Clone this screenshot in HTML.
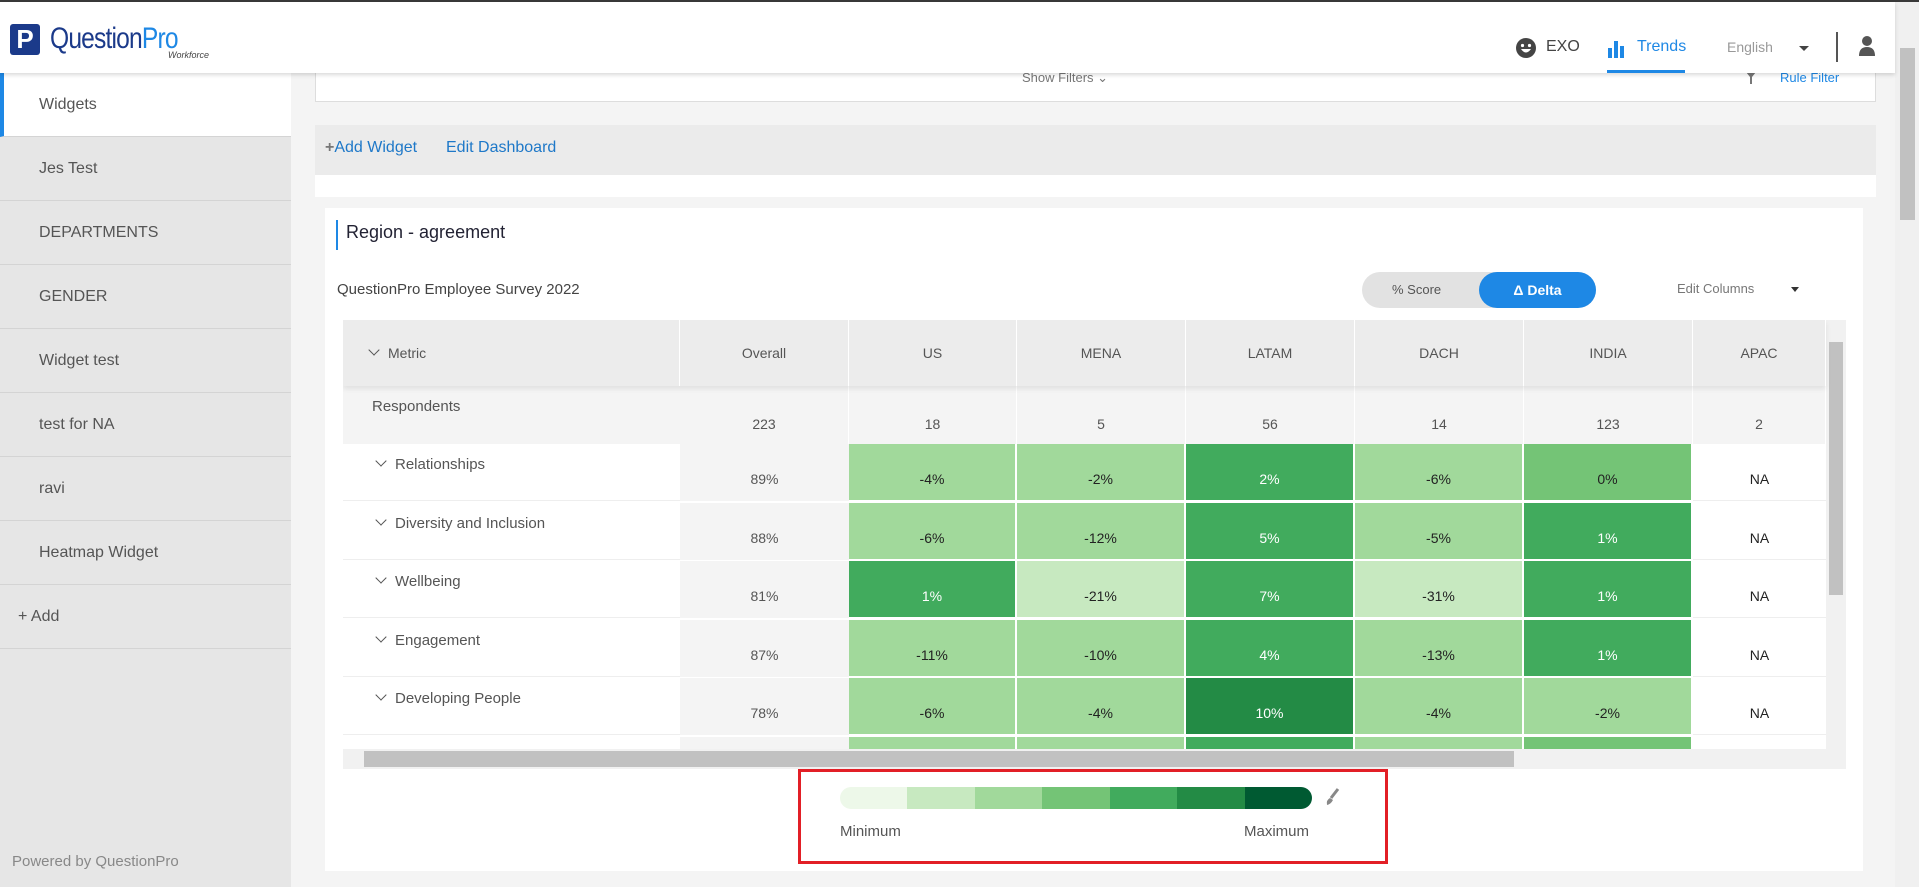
<!DOCTYPE html>
<html><head><meta charset="utf-8"><style>
*{box-sizing:border-box;margin:0;padding:0}
body{width:1919px;height:887px;overflow:hidden;background:#f4f4f4;font-family:"Liberation Sans",sans-serif;color:#555;position:relative}
.a{position:absolute}
.top{left:0;top:0;width:1919px;height:2px;background:#3a3a3a}
.hdr{left:0;top:2px;width:1895px;height:71px;background:#fff;box-shadow:0 2px 4px rgba(0,0,0,.15);z-index:5}
.side{left:0;top:73px;width:291px;height:814px;background:#e6e6e6}
.si{position:absolute;left:0;width:291px;height:64px;border-bottom:1px solid #d4d4d4;font-size:16px;color:#555;padding-left:39px;line-height:64px}
.cell{position:absolute;text-align:center;font-size:14px;color:#333}
.hc{position:absolute;top:0;height:66px;line-height:66px;text-align:center;font-size:14px;color:#555;border-right:1px solid #fff}
.rl{position:absolute;font-size:15px;color:#555}
.chev{display:inline-block;width:8px;height:8px;border-right:1.6px solid #555;border-bottom:1.6px solid #555;transform:rotate(45deg);margin-right:10px;position:relative;top:-4px}
</style></head><body>
<div class="a top"></div>
<div class="a hdr">
  <div class="a" style="left:10px;top:22px;width:30px;height:31px;background:#1b3a8a;border-radius:3px;color:#fff;font-weight:bold;font-size:26px;line-height:31px;text-align:center">P</div>
  <div class="a" style="left:50px;top:20px;font-size:30px;color:#1b3a8a;letter-spacing:-1px;transform:scaleX(.82);transform-origin:left">Question<span style="color:#1e88e5">Pro</span></div>
  <div class="a" style="left:168px;top:48px;font-size:9px;font-style:italic;color:#444">Workforce</div>
  <svg class="a" style="left:1515px;top:35px" width="22" height="22"><circle cx="11" cy="11" r="10" fill="#444"/><circle cx="7.5" cy="8.5" r="1.6" fill="#fff"/><circle cx="14.5" cy="8.5" r="1.6" fill="#fff"/><path d="M6 12 Q11 19 16 12Z" fill="#fff"/></svg>
  <div class="a" style="left:1546px;top:36px;font-size:16px;color:#444">EXO</div>
  <svg class="a" style="left:1607px;top:37px" width="20" height="20"><rect x="1" y="9" width="4" height="10" fill="#1e88e5"/><rect x="7" y="2" width="4" height="17" fill="#1e88e5"/><rect x="13" y="7" width="4" height="12" fill="#1e88e5"/></svg>
  <div class="a" style="left:1637px;top:36px;font-size:16px;color:#1e88e5">Trends</div>
  <div class="a" style="left:1607px;top:68px;width:78px;height:3px;background:#1e88e5"></div>
  <div class="a" style="left:1727px;top:37px;font-size:14px;color:#999">English</div>
  <div class="a" style="left:1799px;top:44px;border:5px solid transparent;border-top:5px solid #444"></div>
  <div class="a" style="left:1836px;top:30px;width:2px;height:30px;background:#555"></div>
  <svg class="a" style="left:1858px;top:32px" width="18" height="24"><circle cx="9" cy="7" r="5" fill="#555"/><path d="M1 22 Q1 13 9 13 Q17 13 17 22Z" fill="#555"/></svg>
</div>
<div class="a" style="left:1895px;top:2px;width:24px;height:885px;background:#f0f0f0"></div>
<div class="a" style="left:1900px;top:48px;width:15px;height:172px;background:#c1c1c1"></div>
<div class="a side">
  <div class="si" style="top:0;background:#fff;border-left:4px solid #1e88e5;padding-left:35px">Widgets</div>
  <div class="si" style="top:64px">Jes Test</div>
  <div class="si" style="top:128px">DEPARTMENTS</div>
  <div class="si" style="top:192px">GENDER</div>
  <div class="si" style="top:256px">Widget test</div>
  <div class="si" style="top:320px">test for NA</div>
  <div class="si" style="top:384px">ravi</div>
  <div class="si" style="top:448px">Heatmap Widget</div>
  <div class="si" style="top:512px;padding-left:18px">+ Add</div>
  <div class="a" style="left:12px;top:780px;font-size:15px;color:#888">Powered by QuestionPro</div>
</div>
<div class="a" style="left:315px;top:73px;width:1561px;height:29px;background:#fff;border:1px solid #ddd;border-top:none"></div>
<div class="a" style="left:1022px;top:70px;font-size:13px;color:#777;z-index:1">Show Filters ⌄</div>
<svg class="a" style="left:1746px;top:72px" width="10" height="12"><path d="M0 0 H10 L6 5 V12 H4 V5Z" fill="#777"/></svg>
<div class="a" style="left:1780px;top:70px;font-size:13px;color:#1e88e5">Rule Filter</div>
<div class="a" style="left:315px;top:125px;width:1561px;height:50px;background:#ebebeb"></div>
<div class="a" style="left:325px;top:139px;font-size:16px;color:#1e78c8"><b style="color:#777">+</b>Add Widget</div>
<div class="a" style="left:446px;top:139px;font-size:16px;color:#1e78c8">Edit Dashboard</div>
<div class="a" style="left:315px;top:175px;width:1561px;height:22px;background:#fff"></div>
<div class="a" style="left:325px;top:208px;width:1538px;height:663px;background:#fff"></div>
<div class="a" style="left:336px;top:220px;width:2px;height:30px;background:#1e88e5"></div>
<div class="a" style="left:346px;top:222px;font-size:18px;color:#223">Region - agreement</div>
<div class="a" style="left:337px;top:281px;font-size:15px;color:#444">QuestionPro Employee Survey 2022</div>
<div class="a" style="left:1362px;top:272px;width:234px;height:36px;border-radius:18px;background:#e2e2e2"></div>
<div class="a" style="left:1392px;top:282px;font-size:13px;color:#555">% Score</div>
<div class="a" style="left:1479px;top:272px;width:117px;height:36px;border-radius:18px;background:#1e88e5;color:#fff;font-size:14px;font-weight:bold;text-align:center;line-height:36px">Δ Delta</div>
<div class="a" style="left:1677px;top:281px;font-size:13px;color:#777">Edit Columns</div>
<div class="a" style="left:1791px;top:287px;border:4px solid transparent;border-top:5px solid #333"></div>

<div class="a" style="left:343px;top:320px;width:1503px;height:449px;background:#fff;overflow:hidden">
 <div class="a" style="left:0;top:0;width:1483px;height:66px;background:#ececec;box-shadow:0 3px 5px rgba(0,0,0,.08);z-index:2">
  <div class="hc" style="left:0;width:337px;text-align:left;padding-left:27px"><span class="chev"></span>Metric</div>
  <div class="hc" style="left:337px;width:169px">Overall</div>
  <div class="hc" style="left:506px;width:168px">US</div>
  <div class="hc" style="left:674px;width:169px">MENA</div>
  <div class="hc" style="left:843px;width:169px">LATAM</div>
  <div class="hc" style="left:1012px;width:169px">DACH</div>
  <div class="hc" style="left:1181px;width:169px">INDIA</div>
  <div class="hc" style="left:1350px;width:133px">APAC</div>
 </div>
 <div class="a" style="left:0;top:66px;width:1483px;height:58px;background:#f4f4f4"></div>
 <div class="rl" style="left:29px;top:78px">Respondents</div>
 <div id="rows"></div>
 <div class="a" style="left:1483px;top:0;width:20px;height:429px;background:#f1f1f1"></div>
 <div class="a" style="left:1486px;top:22px;width:14px;height:253px;background:#c1c1c1"></div>
 <div class="a" style="left:0;top:429px;width:1503px;height:20px;background:#f1f1f1"></div>
 <div class="a" style="left:21px;top:431px;width:1150px;height:16px;background:#c1c1c1"></div>
</div>

<div class="a" style="left:798px;top:769px;width:590px;height:95px;border:3px solid #e21f26"></div>
<div class="a" style="left:840px;top:787px;width:472px;height:22px;border-radius:11px;overflow:hidden;display:flex">
 <div style="flex:1;background:#edf8e9"></div><div style="flex:1;background:#c7e9c0"></div><div style="flex:1;background:#a1d99b"></div><div style="flex:1;background:#74c476"></div><div style="flex:1;background:#41ab5d"></div><div style="flex:1;background:#238b45"></div><div style="flex:1;background:#005a32"></div>
</div>
<svg class="a" style="left:1324px;top:787px" width="16" height="20"><path d="M14 2 L7 11" stroke="#888" stroke-width="3"/><path d="M6 11 Q2 13 3 18 Q7 17 9 13Z" fill="#888"/></svg>
<div class="a" style="left:840px;top:823px;font-size:15px;color:#555">Minimum</div>
<div class="a" style="left:1244px;top:823px;font-size:15px;color:#555">Maximum</div>

<script>
var cols=[[337,169],[506,168],[674,169],[843,169],[1012,169],[1181,169],[1350,133]];
var C={a:'#a1d99b',b:'#41ab5d',c:'#74c476',d:'#c7e9c0',e:'#238b45'};
var resp=['223','18','5','56','14','123','2'];
var rows=[['Relationships','89%',['-4%','a'],['-2%','a'],['2%','b'],['-6%','a'],['0%','c']],
['Diversity and Inclusion','88%',['-6%','a'],['-12%','a'],['5%','b'],['-5%','a'],['1%','b']],
['Wellbeing','81%',['1%','b'],['-21%','d'],['7%','b'],['-31%','d'],['1%','b']],
['Engagement','87%',['-11%','a'],['-10%','a'],['4%','b'],['-13%','a'],['1%','b']],
['Developing People','78%',['-6%','a'],['-4%','a'],['10%','e'],['-4%','a'],['-2%','a']],
['','',['','a'],['','a'],['','b'],['','a'],['','c']]];
var h='';
for(var i=0;i<7;i++)h+='<div class="cell" style="left:'+cols[i][0]+'px;top:66px;width:'+cols[i][1]+'px;height:58px;padding-top:20px;line-height:36px;background:#f4f4f4;border-right:1px solid #fff;color:#555">'+resp[i]+'</div>';
for(var r=0;r<rows.length;r++){
 var t=124+r*58.6,R=rows[r],hh=57;
 h+='<div class="a" style="left:0;top:'+t+'px;width:337px;height:'+hh+'px;border-bottom:1px solid #eee"></div>';
 if(R[0])h+='<div class="rl" style="left:34px;top:'+(t+12)+'px"><span class="chev"></span>'+R[0]+'</div>';
 h+='<div class="cell" style="left:337px;top:'+t+'px;width:169px;height:'+hh+'px;background:#f4f4f4;line-height:'+(hh+14)+'px;color:#555">'+R[1]+'</div>';
 for(var k=0;k<5;k++){var v=R[k+2],dark=(v[1]=='b'||v[1]=='e');
  h+='<div class="cell" style="left:'+cols[k+1][0]+'px;top:'+t+'px;width:'+(cols[k+1][1]-2)+'px;height:'+(hh-1)+'px;background:'+C[v[1]]+';line-height:'+(hh+14)+'px;color:'+(dark?'#fff':'#222')+'">'+v[0]+'</div>';}
 h+='<div class="cell" style="left:1350px;top:'+t+'px;width:133px;height:'+hh+'px;line-height:'+(hh+14)+'px;border-bottom:1px solid #eee;color:#222">'+(R[0]?'NA':'')+'</div>';
}
document.getElementById('rows').innerHTML=h;
</script>
</body></html>
